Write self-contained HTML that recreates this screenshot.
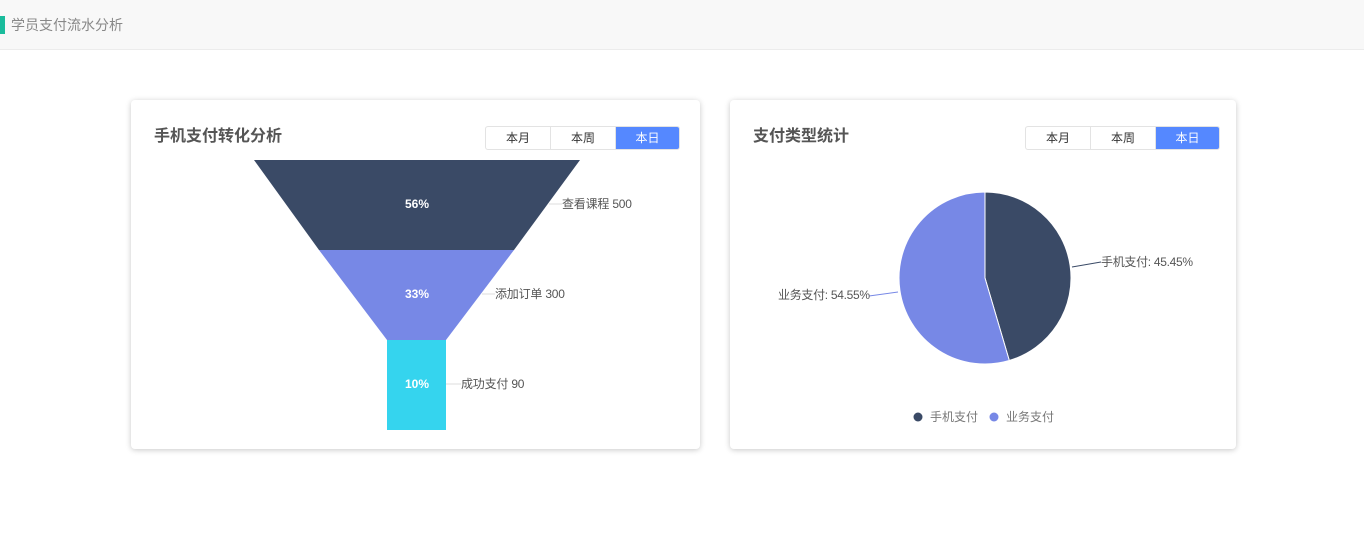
<!DOCTYPE html>
<html><head><meta charset="utf-8"><style>
body{margin:0;width:1364px;height:559px;background:#fff;font-family:"Liberation Sans","Noto Sans CJK SC",sans-serif;position:relative;overflow:hidden}
.hdr{position:absolute;left:0;top:0;width:1364px;height:49px;background:#f8f8f8;border-bottom:1px solid #ececec}
.hdr .bar{position:absolute;left:0;top:16px;width:5px;height:18px;background:#1abc9c}
.hdr .t{position:absolute;left:11px;top:16px;font-size:14px;color:#888;line-height:18px}
.card{position:absolute;top:100px;height:349px;background:#fff;border-radius:4px;box-shadow:0 1px 6px rgba(0,0,0,.22)}
.title{position:absolute;top:22px;font-size:16px;font-weight:bold;color:#555}
.btns{position:absolute;top:26px;display:flex;border:1px solid #e3e3e3;border-radius:3px;overflow:hidden}
.btns div{width:64px;height:22px;line-height:22px;text-align:center;font-size:12px;color:#333;border-right:1px solid #e3e3e3}
.btns div:last-child{border-right:none;background:#5588ff;color:#fff;width:63px}
svg{position:absolute;left:0;top:0}
</style></head><body>
<div class="hdr"><div class="bar"></div><div class="t">学员支付流水分析</div></div>
<div class="card" style="left:131px;width:569px">
<div class="title" style="left:23px">手机支付转化分析</div>
<div class="btns" style="left:354px"><div>本月</div><div>本周</div><div>本日</div></div>
</div>
<div class="card" style="left:730px;width:506px">
<div class="title" style="left:23px">支付类型统计</div>
<div class="btns" style="left:295px"><div>本月</div><div>本周</div><div>本日</div></div>
</div>
<svg width="1364" height="559" font-family="Liberation Sans, Noto Sans CJK SC, sans-serif" font-size="12">
<polygon points="254,160 580,160 514,250 319,250" fill="#3a4a66"/>
<polygon points="319,250 514,250 446,340 387,340" fill="#7788e6"/>
<rect x="387" y="340" width="59" height="90" fill="#35d4ee"/>
<g fill="#fff" font-weight="bold" text-anchor="middle"><text x="417" y="208">56%</text><text x="417" y="298">33%</text><text x="417" y="388">10%</text></g>
<g stroke="#ddd"><line x1="549" y1="204" x2="562" y2="204"/><line x1="482" y1="294" x2="495" y2="294"/><line x1="446" y1="384" x2="461" y2="384"/></g>
<g fill="#555" letter-spacing="-0.2"><text x="562" y="208">查看课程 500</text><text x="495" y="298">添加订单 300</text><text x="461" y="388">成功支付 90</text></g>
<path d="M985,278 L985,192 A86,86 0 0 1 1009.3,360.5 Z" fill="#3a4a66" stroke="#fff"/>
<path d="M985,278 L1009.3,360.5 A86,86 0 1 1 985,192 Z" fill="#7788e6" stroke="#fff"/>
<line x1="1072" y1="267" x2="1101" y2="262" stroke="#3a4a66"/>
<line x1="898" y1="292" x2="869" y2="296" stroke="#7788e6"/>
<g fill="#555" letter-spacing="-0.3"><text x="1101" y="266">手机支付: 45.45%</text><text x="778" y="299">业务支付: 54.55%</text></g>
<circle cx="918" cy="417" r="4.5" fill="#3a4a66"/><circle cx="994" cy="417" r="4.5" fill="#7788e6"/>
<g fill="#777"><text x="930" y="421">手机支付</text><text x="1006" y="421">业务支付</text></g>
</svg>
</body></html>
